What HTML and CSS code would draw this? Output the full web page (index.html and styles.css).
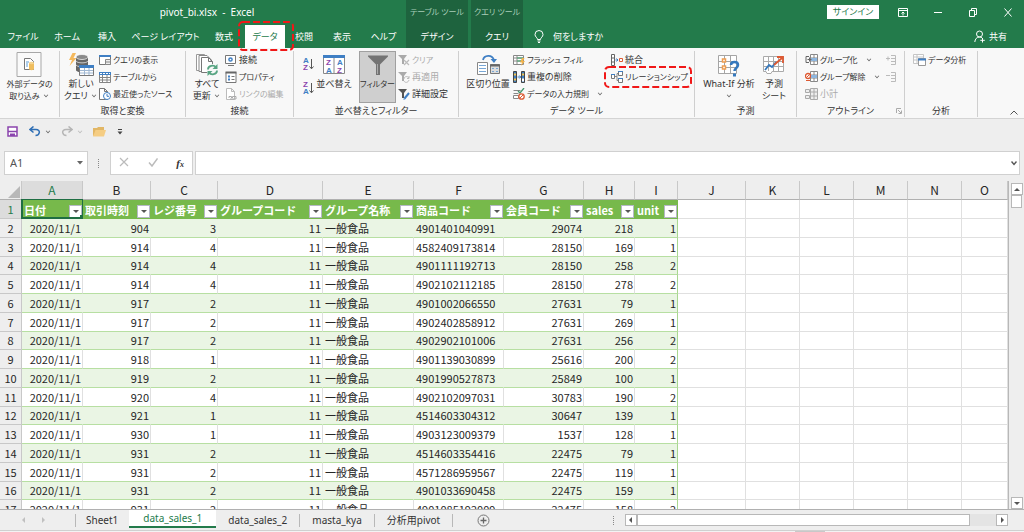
FILE: index.html
```html
<!DOCTYPE html>
<html lang="ja">
<head>
    <meta charset="UTF-8">
    <meta name="viewport" content="width=device-width, initial-scale=1.0">
    <title>pivot_bi.xlsx - Excel</title>
    <link rel="stylesheet" href="styles.css">
</head>
<body>
    <header class="titlebar">
        <div class="main-tabs">
            <div class="doc-title">pivot_bi.xlsx&nbsp; -&nbsp; Excel</div>
            <nav class="tabs">
                <button type="button" class="tab">ファイル</button>
                <button type="button" class="tab">ホーム</button>
                <button type="button" class="tab">挿入</button>
                <button type="button" class="tab">ページ レイアウト</button>
                <button type="button" class="tab">数式</button>
                <button type="button" class="tab active">データ
                    <svg class="mark mark-tab" viewBox="0 0 56 30"><rect x="1" y="1" width="54" height="28" rx="4"/></svg>
                </button>
                <button type="button" class="tab">校閲</button>
                <button type="button" class="tab">表示</button>
                <button type="button" class="tab">ヘルプ</button>
            </nav>
        </div>
        <div class="context context-table">
            <span class="context-name kana">テーブル ツール</span>
            <button type="button" class="tab">デザイン</button>
        </div>
        <div class="context context-query">
            <span class="context-name kana">クエリ ツール</span>
            <button type="button" class="tab">クエリ</button>
        </div>
        <div class="title-right">
            <div class="window-row">
                <button type="button" class="signin">サインイン</button>
                <button type="button" class="win" aria-label="リボンの表示オプション">
                    <svg width="10" height="9" viewBox="0 0 10 9"><path d="M.5 .5h9v8h-9zM.5 2.500h9M5 7.500V4M3.500 5.500L5 4l1.500 1.500"/></svg>
                </button>
                <button type="button" class="win" aria-label="最小化">
                    <svg width="10" height="9" viewBox="0 0 10 9"><path d="M1 4.500h8"/></svg>
                </button>
                <button type="button" class="win" aria-label="元に戻す">
                    <svg width="10" height="9" viewBox="0 0 10 9"><path d="M1.500 2.500h5v6h-5zM3.500 2.500v-2h5v6h-2"/></svg>
                </button>
                <button type="button" class="win" aria-label="閉じる">
                    <svg width="10" height="9" viewBox="0 0 10 9"><path d="M1.500 .5l7 8M8.500 .5l-7 8"/></svg>
                </button>
            </div>
            <div class="tell-row">
                <button type="button" class="tell">
                    <svg width="10" height="13" viewBox="0 0 10 13"><path d="M3.500 9.500C3.500 7.500 1 7 1 4.500a4 4 0 0 1 8 0C9 7 6.500 7.500 6.500 9.500zM3.500 11h3M4 12.500h2"/></svg>
                    何をしますか
                </button>
                <button type="button" class="share">
                    <svg width="12" height="13" viewBox="0 0 12 13"><circle cx="5.500" cy="4" r="3"/><path d="M.8 12c.2-3 2-5 4.700-5 1.200 0 2 .4 2.700 1M8.500 8v4.500M6.300 10.300h4.500"/></svg>
                    共有
                </button>
            </div>
        </div>
    </header>

    <section class="ribbon">
        <div class="group g-external">
            <div class="group-body">
                <button type="button" class="big">
                    <span class="big-icon"><svg width="26" height="25" viewBox="0 0 26 25"><path d="M1 .5h24v24H1z" fill="#fafafa" stroke="#a8a8a8"/><path d="M8.500 6.500h6l3 3v8h-9z" fill="#fff" stroke="#777"/><path d="M10 10h3M10 12h2M10 14h2" stroke="#5b9bd5"/><path d="M13 11v6c0 1.500 5 1.500 5 0v-6" fill="#efbd5d"/><ellipse cx="15.500" cy="11" rx="2.500" ry="1.200" fill="#f6d591"/></svg></span>
                    <span class="kana">外部データの<br>取り込み <i class="caret"></i></span>
                </button>
            </div>
        </div>

        <div class="group g-transform">
            <div class="group-body">
                <button type="button" class="big">
                    <span class="big-icon"><svg width="26" height="25" viewBox="0 0 26 25"><path d="M8 5v13c0 3 12 3 12 0V5" fill="#666"/><ellipse cx="14" cy="5" rx="6" ry="2.500" fill="#8a8a8a" stroke="#fff" stroke-width=".7"/><path d="M8 9c1 2.500 11 2.500 12 0M8 13c1 2 7 2 8 1" fill="none" stroke="#ccc"/><path d="M4.500 1L1 8h3L1.500 14 8.500 6H5.500L8 1z" fill="#f5b95d"/><path d="M11.500 13.500h14v10h-14z" fill="#fff" stroke="#777"/><path d="M11 13h15v3H11z" fill="#3f7fc4"/><path d="M12 18.500h13M12 21h13M16.500 16v7M21 16v7" stroke="#9fb7d2"/></svg></span>
                    <span>新しい<br>クエリ <i class="caret"></i></span>
                </button>
                <div class="stack">
                    <button type="button" class="small kana"><svg width="12" height="12" viewBox="0 0 12 12"><path d="M.5 1.500h11v9H.5z" fill="#fff" stroke="#777"/><path d="M0 1h12v2H0z" fill="#3f7fc4"/><path d="M6.500 5.500h5v5h-5zM7 8h4" fill="#eee" stroke="#888"/></svg>クエリの表示</button>
                    <button type="button" class="small kana"><svg width="12" height="12" viewBox="0 0 12 12"><path d="M.5 1.500h11v10H.5zM0 6.500h12M0 9h12M3.500 4v8M8 4v8" fill="#fff" stroke="#858585"/><path d="M0 1h12v3H0z" fill="#3f7fc4"/><path d="M1 2.500h10" stroke="#fff" stroke-dasharray="2 1"/></svg>テーブルから</button>
                    <button type="button" class="small kana"><svg width="12" height="12" viewBox="0 0 12 12"><path d="M.5 .5h5l3 3v8h-8zM5.500 .5v3h3" fill="#fff" stroke="#777"/><circle cx="8" cy="8" r="3.500" fill="#fff" stroke="#3f7fc4"/><path d="M8 6v2.300h2" fill="none" stroke="#3f7fc4"/></svg>最近使ったソース</button>
                </div>
            </div>
            <div class="group-name">取得と変換</div>
        </div>

        <div class="group g-connect">
            <div class="group-body">
                <button type="button" class="big">
                    <span class="big-icon"><svg width="24" height="25" viewBox="0 0 24 25"><path d="M1.500 2.500h8l4 4v12h-12z" fill="#fff" stroke="#999"/><path d="M4 3.500h8l4 4v12H4z" fill="#fff" stroke="#888"/><path d="M6.500 5.500h7l4 4v11h-11zM13.500 5.500v4h4" fill="#fff" stroke="#777"/><circle cx="17.500" cy="18" r="6" fill="#f8f8f8"/><path d="M13 17.500c0-4 6-5 8-2M22 18.500c0 4-6 5-8 2" fill="none" stroke="#58a583" stroke-width="1.800"/><path d="M22.500 12v5h-5zM12.500 24v-5h5z" fill="#58a583"/></svg></span>
                    <span>すべて<br>更新 <i class="caret"></i></span>
                </button>
                <div class="stack">
                    <button type="button" class="small"><svg width="12" height="12" viewBox="0 0 12 12"><path d="M.5 1.500h10v8H.5zM3 11.500h6" fill="#fff" stroke="#777"/><circle cx="5.500" cy="5.500" r="1.600" fill="none" stroke="#3f7fc4" stroke-width="1.500"/></svg>接続</button>
                    <button type="button" class="small kana"><svg width="12" height="12" viewBox="0 0 12 12"><path d="M1 1.500h10v10H1z" fill="#fff" stroke="#777"/><path d="M.5 1.500h11" stroke="#666" stroke-width="2"/><path d="M3 5.500h2M3 8.500h2" stroke="#3f7fc4" stroke-width="2"/><path d="M6.500 5.500h3M6.500 8.500h3" stroke="#777"/></svg>プロパティ</button>
                    <button type="button" class="small kana off"><svg width="12" height="12" viewBox="0 0 12 12"><path d="M1.500 .5h5l3 3v8h-8zM6.500 .5v3h3" fill="#fff" stroke="#bbb"/><path d="M4 10V8.500h2.500V10M7.500 10V8.500H11V11H5" fill="none" stroke="#aaa"/></svg>リンクの編集</button>
                </div>
            </div>
            <div class="group-name">接続</div>
        </div>

        <div class="group g-sort">
            <div class="group-body">
                <div class="sort-pair">
                    <button type="button" class="sort" aria-label="昇順">
                        <svg width="11" height="14" viewBox="0 0 11 14"><text x="0" y="6" class="az a">A</text><text x="0" y="13" class="az z">Z</text><path d="M8.500 2v9.500M6.500 9.500l2 2.300 2-2.300" fill="none" stroke="#555"/></svg>
                    </button>
                    <button type="button" class="sort" aria-label="降順">
                        <svg width="11" height="14" viewBox="0 0 11 14"><text x="0" y="6" class="az z">Z</text><text x="0" y="13" class="az a">A</text><path d="M8.500 2v9.500M6.500 9.500l2 2.300 2-2.300" fill="none" stroke="#555"/></svg>
                    </button>
                </div>
                <button type="button" class="big">
                    <span class="big-icon"><svg width="22" height="20" viewBox="0 0 22 20"><path d="M.5 .5h21v18H.5zM11 3v16" fill="#fff" stroke="#888"/><path d="M0 0h22v3H0z" fill="#3f7fc4"/><text x="3" y="10" class="az z">Z</text><text x="3" y="18" class="az a">A</text><text x="14" y="10" class="az a">A</text><text x="14" y="18" class="az z">Z</text></svg></span>
                    <span>並べ替え</span>
                </button>
                <button type="button" class="big pressed">
                    <span class="big-icon"><svg width="22" height="22" viewBox="0 0 22 22"><path d="M1 1.500h20v1l-8 8V21H9V10.500l-8-8z" fill="#737373"/><path d="M10.500 10v10" stroke="#aaa"/></svg></span>
                    <span class="kana">フィルター</span>
                </button>
                <div class="stack">
                    <button type="button" class="small kana off"><svg width="12" height="12" viewBox="0 0 12 12"><path d="M0 1h9L6 5v5H4V5z" fill="#aaa"/><path d="M6 6l5 5M11 6l-5 5" stroke="#bbb" stroke-width="1.200"/></svg>クリア</button>
                    <button type="button" class="small off"><svg width="12" height="12" viewBox="0 0 12 12"><path d="M0 1h9L6 5v5H4V5z" fill="#aaa"/><path d="M6 8c0-3 4-3 5-1M11 9c-1 3-4 3-5 1M11 5v2.500H9" fill="none" stroke="#bbb"/></svg>再適用</button>
                    <button type="button" class="small"><svg width="12" height="12" viewBox="0 0 12 12"><path d="M0 1h9L6 5v5H4V5z" fill="#555"/><path d="M11 5L6.500 10.500" stroke="#3f7fc4" stroke-width="2"/><path d="M5.500 12l.3-2 1.700 1z" fill="#3f7fc4"/></svg>詳細設定</button>
                </div>
            </div>
            <div class="group-name">並べ替えとフィルター</div>
        </div>

        <div class="group g-tools">
            <div class="group-body">
                <button type="button" class="big">
                    <span class="big-icon"><svg width="24" height="22" viewBox="0 0 24 22"><path d="M7 6c1-5 9-6 11 0" fill="none" stroke="#3f7fc4" stroke-width="1.800"/><path d="M14.500 5H21l-3 4z" fill="#3f7fc4"/><path d="M1.500 8.500h10v12h-10z" fill="#fff" stroke="#888"/><path d="M3 11.500h7M3 14.500h7M3 17.500h7" stroke="#78a7d6"/><path d="M14.500 10.500h9v9h-9z" fill="#ddd" stroke="#777"/><path d="M14 11.500h10" stroke="#666" stroke-width="2"/><path d="M16 14.500h2M20 14.500h2M16 17.500h2M20 17.500h2" stroke="#78a7d6"/></svg></span>
                    <span>区切り位置</span>
                </button>
                <div class="stack stack-tools">
                    <button type="button" class="small kana"><svg width="12" height="12" viewBox="0 0 12 12"><path d="M.5 1.500h10v9H.5zM1 4h9M1 7h7M4 2v8" fill="#fff" stroke="#888"/><path d="M4 4h6M4 7h4" stroke="#65a982" stroke-width="1.300"/><path d="M9 4L7 8.500h2L8 12l4-5h-2l1.500-3z" fill="#f2b24b"/></svg>フラッシュ フィル</button>
                    <button type="button" class="small"><svg width="12" height="12" viewBox="0 0 12 12"><path d="M.5 .5h3v11h-3z" fill="#3f7fc4" stroke="#444"/><path d="M8.500 .5h3v11h-3z" fill="#3f7fc4" stroke="#444"/><path d="M1 3.500h2M1 8.500h2M9 3.500h2" stroke="#f3c34e" stroke-width="2"/><path d="M9 9h2" stroke="#fff" stroke-width="3"/><path d="M4.500 6h3M6.300 4.500L7.800 6 6.300 7.500" fill="none" stroke="#3f7fc4"/></svg>重複の削除</button>
                    <button type="button" class="small kana"><svg width="12" height="12" viewBox="0 0 12 12"><path d="M.5 2.500h7M.5 5.500h5M.5 7.500h5v3h-5z" fill="#fff" stroke="#888"/><path d="M5 3l2 2 4-5" fill="none" stroke="#45966c" stroke-width="1.300"/><circle cx="8.500" cy="8.500" r="2.700" fill="#fff" stroke="#dd5a33" stroke-width="1.300"/><path d="M6.800 10.200l3.400-3.400" stroke="#dd5a33"/></svg>データの入力規則<i class="caret"></i></button>
                </div>
                <div class="stack">
                    <button type="button" class="small"><svg width="12" height="12" viewBox="0 0 12 12"><path d="M.5 .5h3v11h-3zM.5 4h3M.5 8h3" fill="#fff" stroke="#666"/><path d="M4.500 6h2.500M5.500 4.500L7 6 5.500 7.500" fill="none" stroke="#3f7fc4"/><path d="M8.500 4.500h3v3h-3z" fill="#fff" stroke="#dd5a33"/></svg>統合</button>
                    <button type="button" class="small kana"><svg width="12" height="12" viewBox="0 0 12 12"><path d="M4 5.500h2V2.500h2M6 5.500v4h2" fill="none" stroke="#888"/><path d="M.5 3.500h3v4h-3zM7.500 .5h4v4h-4zM7.500 7.500h4v4h-4z" fill="#fff" stroke="#777"/><path d="M0 3.500h4M7 .5h5M7 7.500h5" stroke="#3f7fc4"/></svg>リレーションシップ
                        <svg class="mark mark-relation" viewBox="0 0 88 22"><rect x="1" y="1" width="86" height="20" rx="4"/></svg>
                    </button>
                </div>
            </div>
            <div class="group-name">データ ツール</div>
        </div>

        <div class="group g-forecast">
            <div class="group-body">
                <button type="button" class="big">
                    <span class="big-icon"><svg width="22" height="24" viewBox="0 0 22 24"><path d="M.5 2.500h18v18H.5zM0 8.500h19M0 14.500h19M6.500 2v19M12.500 2v19" fill="#fff" stroke="#a5a5a5"/><path d="M4.500 6h3v3h-3zM4.500 13h3v3h-3z" fill="#fff" stroke="#ee9d52" stroke-width="1.500"/><path d="M13 12c0-4 7-4 7 0 0 3-3.500 3-3.500 6" fill="none" stroke="#3578bd" stroke-width="2.500"/><path d="M15 20.500h3v3h-3z" fill="#3578bd"/></svg></span>
                    <span>What-If 分析<br><i class="caret"></i></span>
                </button>
                <button type="button" class="big">
                    <span class="big-icon"><svg width="22" height="22" viewBox="0 0 22 22"><path d="M.5 2.500h20v15H9l-1 2H4l-1-2H.5zM0 7.500h21M0 12.500h21M5.500 2v15M10.500 2v15M15.500 2v15" fill="#fff" stroke="#aaa"/><path d="M2 16l4-5 3 2 4-5" fill="none" stroke="#3578bd" stroke-width="1.800"/><path d="M11 11l8-7M14 3h6v6" fill="none" stroke="#dd5a33" stroke-width="1.800"/></svg></span>
                    <span>予測<br>シート</span>
                </button>
            </div>
            <div class="group-name">予測</div>
        </div>

        <div class="group g-outline">
            <div class="group-body">
                <div class="stack">
                    <button type="button" class="small kana"><svg width="13" height="12" viewBox="0 0 13 12"><path d="M5.500 .5h7v10h-7zM5 4h8M5 7h8M9 1v9" fill="#fff" stroke="#888"/><path d="M6 4h6v3H6z" fill="#8db6df"/><path d="M4 2.500H1v6h3M2.500 5.500h4M4.500 3.500v4" fill="none" stroke="#666"/></svg>グループ化<i class="caret"></i></button>
                    <button type="button" class="small kana"><svg width="13" height="12" viewBox="0 0 13 12"><path d="M5.500 .5h7v10h-7zM5 4h8M5 7h8M9 1v9" fill="#fff" stroke="#888"/><path d="M6 4h6v3H6z" fill="#8db6df"/><circle cx="3" cy="5" r="2.500" fill="#fff" stroke="#dd5a33" stroke-width="1.300"/><path d="M1.500 6.500l3-3M1 9.500h4" stroke="#dd5a33"/></svg>グループ解除<i class="caret"></i></button>
                    <button type="button" class="small off"><svg width="13" height="12" viewBox="0 0 13 12"><path d="M.5 1.500h4v3h-4zM.5 7.500h4v3h-4zM5.500 .5h7v11h-7zM5 4h8M5 8h8M9 1v10" fill="#eee" stroke="#aaa"/></svg>小計</button>
                </div>
                <div class="stack stack-detail">
                    <button type="button" class="small" aria-label="詳細データの表示"><svg width="10" height="12" viewBox="0 0 10 12"><path d="M0 4.500h4M2 2.500v4M5 1.500h4.500v9H5M5 4.500h4M5 7.500h4" fill="none" stroke="#bbb"/></svg></button>
                    <button type="button" class="small" aria-label="詳細を表示しない"><svg width="10" height="12" viewBox="0 0 10 12"><path d="M0 4.500h4M5 1.500h4.500v9H5M5 4.500h4M5 7.500h4" fill="none" stroke="#bbb"/></svg></button>
                </div>
            </div>
            <div class="group-name">アウトライン
                <svg class="launcher" width="6" height="6" viewBox="0 0 6 6"><path d="M.5 5V.5H5M2 2l3 3M5.500 2.500v3h-3" fill="none" stroke="#aaa"/></svg>
            </div>
        </div>

        <div class="group g-analysis">
            <div class="group-body">
                <div class="stack">
                    <button type="button" class="small kana"><svg width="13" height="12" viewBox="0 0 13 12"><path d="M.5 .5h10v9H.5zM1 3h9M1 6h9M4 1v8" fill="#fff" stroke="#c5c5c5"/><path d="M5.500 4.500h7v7h-7z" fill="#fff" stroke="#999"/><path d="M5 5.500h8" stroke="#3f7fc4" stroke-width="2"/></svg>データ分析</button>
                </div>
            </div>
            <div class="group-name">分析</div>
        </div>
        <button type="button" class="collapse" aria-label="リボンを折りたたむ"><svg width="8" height="5" viewBox="0 0 8 5"><path d="M.5 4.500L4 1l3.500 3.500" fill="none" stroke="#555"/></svg></button>
    </section>

    <div class="quick">
        <button type="button" aria-label="上書き保存"><svg width="11" height="11" viewBox="0 0 11 11"><path d="M1 1h9v9H1z" fill="#fff" stroke="#8b44ad" stroke-width="1.500"/><path d="M1 5.500h9" stroke="#8b44ad" stroke-width="1.500"/><path d="M3 7.500h5V10H3z" fill="#8b44ad"/></svg></button>
        <button type="button" aria-label="元に戻す"><svg width="12" height="11" viewBox="0 0 12 11"><path d="M4.500 .5L1 3.500l3.500 3M1 3.500h6c5 0 4 6-.5 6" fill="none" stroke="#2f6fb5" stroke-width="1.500"/></svg><i class="caret"></i></button>
        <button type="button" class="off" aria-label="やり直し"><svg width="12" height="11" viewBox="0 0 12 11"><path d="M7.500 .5L11 3.500l-3.500 3M11 3.500H5c-5 0-4 6 .5 6" fill="none" stroke="#b5b5b5" stroke-width="1.500"/></svg><i class="caret"></i></button>
        <button type="button" aria-label="開く"><svg width="13" height="11" viewBox="0 0 13 11"><path d="M0 10V2h4l1-1h6v3" fill="#e2b766"/><path d="M2.500 4H13l-2 6.500H0z" fill="#f5cd83"/></svg></button>
        <button type="button" class="more" aria-label="クイック アクセス ツール バーのユーザー設定"><svg width="6" height="6" viewBox="0 0 6 6"><path d="M1 .5h4" stroke="#444"/><path d="M.5 2.500h5L3 5.500z" fill="#444"/></svg></button>
    </div>

    <div class="formula">
        <div class="name-box">
            <input type="text" value="A1" aria-label="名前ボックス">
            <svg width="6" height="4" viewBox="0 0 6 4"><path d="M0 0h6L3 3.500z" fill="#666"/></svg>
        </div>
        <span class="dots"></span>
        <div class="fx">
            <button type="button" aria-label="キャンセル"><svg width="10" height="10" viewBox="0 0 10 10"><path d="M1 1l8 8M9 1L1 9" stroke="#bbb" stroke-width="1.200"/></svg></button>
            <button type="button" aria-label="入力"><svg width="10" height="10" viewBox="0 0 10 10"><path d="M1 5.500L4 9l5.500-7.500" fill="none" stroke="#bbb" stroke-width="1.500"/></svg></button>
            <button type="button" class="fx-btn" aria-label="関数の挿入">f<sub>x</sub></button>
        </div>
        <div class="formula-box">
            <input type="text" value="" aria-label="数式バー">
            <svg width="6" height="5" viewBox="0 0 6 5"><path d="M.5 .5L3 3.500 5.500 .5" fill="none" stroke="#555" stroke-width="1.400"/></svg>
        </div>
    </div>

    <main class="sheet">
        <div class="cells">
            <table class="grid">
                <colgroup>
                    <col class="c-num"><col class="c-a"><col class="c-b"><col class="c-c"><col class="c-d"><col class="c-e">
                    <col class="c-f"><col class="c-g"><col class="c-h"><col class="c-i"><col class="c-j">
                    <col class="c-std"><col class="c-std"><col class="c-std"><col class="c-std"><col>
                </colgroup>
                <thead><tr class="letters"></tr></thead>
                <tbody></tbody>
            </table>
        </div>
        <div class="vscroll">
            <button type="button" class="arrow up" aria-label="上へ"></button>
            <div class="vthumb"></div>
            <button type="button" class="arrow down" aria-label="下へ"></button>
        </div>
    </main>

    <footer class="bottom">
        <div class="sheet-nav">
            <button type="button" class="arrow left faint" aria-label="前のシート"></button>
            <button type="button" class="arrow right faint" aria-label="次のシート"></button>
        </div>
        <button type="button" class="sheet-tab first">Sheet1</button>
        <button type="button" class="sheet-tab current">data_sales_1</button>
        <button type="button" class="sheet-tab">data_sales_2</button>
        <button type="button" class="sheet-tab">masta_kya</button>
        <button type="button" class="sheet-tab">分析用pivot</button>
        <button type="button" class="add" aria-label="新しいシート"><svg width="13" height="13" viewBox="0 0 13 13"><circle cx="6.500" cy="6.500" r="5.500" fill="none" stroke="#777"/><path d="M6.500 3.500v6M3.500 6.500h6" stroke="#666" stroke-width="1.300"/></svg></button>
        <span class="dots"></span>
        <div class="hscroll">
            <button type="button" class="arrow left" aria-label="左へ"></button>
            <div class="hthumb"></div>
            <button type="button" class="arrow right" aria-label="右へ"></button>
        </div>
    </footer>
    <div class="status"><span></span></div>

    <script src="script.js"></script>
</body>
</html>
```
FILE: styles.css
```css
*{
    margin: 0;
    padding: 0;
    box-sizing: border-box;
}
body{
    height: 100vh;
    display: flex;
    flex-direction: column;
    overflow: hidden;
    background-color: #eeeeee;
    color: #333;
    font-family: "Noto Sans", "Noto Sans CJK JP", sans-serif;
    font-size: 9px;
    line-height: 12px;
    font-feature-settings: "palt";
}
button, input{
    font: inherit;
    font-feature-settings: inherit;
    color: inherit;
    border: none;
    background: none;
}
button{
    white-space: nowrap;
}
svg{
    flex: none;
}
.kana{
    font-size: 8px;
}
.off{
    color: #aaa;
}
.caret{
    display: inline-block;
    width: 4px;
    height: 4px;
    margin: 0 2px 2px;
    border: solid #666;
    border-width: 0 1px 1px 0;
    transform: rotate(45deg) scale(0.8);
}
.off .caret{
    border-color: #bbb;
}

/* title bar */
.titlebar{
    display: flex;
    flex: none;
    height: 48px;
    background-color: #237b4b;
    color: #fff;
}
.main-tabs{
    flex: 0 0 406px;
}
.doc-title{
    height: 24px;
    padding-left: 8px;
    text-align: center;
    font-size: 10px;
    line-height: 24px;
}
.tabs{
    display: grid;
    grid-template-columns: 46px 42px 38px 79px 38px 42px 38px 38px 1fr;
    height: 24px;
}
.tab{
    position: relative;
    height: 24px;
    padding-top: 1px;
    text-align: center;
}
.tab.active{
    margin: 1px 0 0 2px;
    height: 23px;
    background-color: #fff;
    color: #237b4b;
}
.mark{
    position: absolute;
    fill: none;
    stroke: #f01818;
    stroke-width: 2;
    stroke-dasharray: 7 3;
    z-index: 1;
}
.mark-tab{
    left: -7px;
    top: -4px;
    width: 56px;
    height: 30px;
}
.context{
    display: flex;
    flex-direction: column;
    background-color: #1e633e;
}
.context-table{
    flex: 0 0 62px;
}
.context-query{
    flex: 0 0 52px;
    margin-left: 3px;
}
.context-name{
    height: 24px;
    line-height: 24px;
    text-align: center;
    color: #a8cdb8;
}
.title-right{
    flex: 1;
}
.window-row, .tell-row{
    display: flex;
    align-items: center;
    height: 24px;
}
.window-row{
    justify-content: flex-end;
    gap: 25px;
    padding-right: 11px;
}
.signin{
    width: 52px;
    height: 14px;
    margin-right: -6px;
    background-color: #fff;
    color: #237b4b;
}
.win, .win svg, .tell svg, .share svg{
    display: block;
    fill: none;
    stroke: #fff;
}
.tell-row{
    justify-content: space-between;
    padding: 1px 17px 0 11px;
}
.tell, .share{
    display: flex;
    align-items: center;
    gap: 3px;
}
.tell{
    gap: 9px;
}

/* ribbon */
.ribbon{
    display: flex;
    flex: none;
    height: 71px;
    padding-top: 3px;
    background-color: #f8f8f8;
    border-bottom: 1px solid #d4d4d4;
}
.group{
    display: flex;
    flex-direction: column;
    min-width: 0;
    height: 66px;
    border-right: 1px solid #cfcfcf;
}
.group-body{
    display: flex;
    height: 54px;
}
.group-name{
    position: relative;
    text-align: center;
}
.big{
    display: flex;
    flex-direction: column;
    align-items: center;
    height: 52px;
}
.big-icon{
    display: flex;
    align-items: center;
    height: 27px;
}
.pressed{
    border: 1px solid #a0a0a0;
    background-color: #cfcfcf;
}
.pressed .big-icon{
    height: 26px;
}
.stack{
    display: flex;
    flex-direction: column;
    align-items: flex-start;
}
.small{
    position: relative;
    display: flex;
    align-items: center;
    gap: 2px;
    height: 17px;
}
.small .caret{
    margin-left: 7px;
}
.g-external{
    flex: 0 0 60px;
    align-items: center;
}
.g-transform{
    flex: 0 0 126px;
}
.g-transform .big{
    width: 32px;
    margin: 0 2px 0 5px;
}
.g-connect{
    flex: 0 0 108px;
}
.g-connect .big{
    width: 32px;
    margin: 0 2px 0 5px;
}
.g-sort{
    flex: 0 0 165px;
}
.sort-pair{
    display: flex;
    flex-direction: column;
    gap: 10px;
    padding: 6px 0 0 9px;
}
.sort{
    height: 14px;
}
.az{
    font: bold 8px "Liberation Sans", sans-serif;
}
.a{
    fill: #3f7fc4;
}
.z{
    fill: #8b44ad;
}
.g-sort .big{
    width: 40px;
}
.g-sort .pressed{
    width: 37px;
    margin: 0 2px 0 5px;
}
.g-tools{
    flex: 0 0 236px;
}
.g-tools .big{
    width: 46px;
    margin: 0 2px 0 6px;
}
.stack-tools{
    width: 98px;
}
.mark-relation{
    left: -7px;
    top: -2px;
    width: 88px;
    height: 22px;
}
.g-forecast{
    flex: 0 0 102px;
}
.g-forecast .big{
    width: 56px;
    margin-left: 6px;
}
.g-forecast .big + .big{
    width: 34px;
    margin-left: 0;
}
.g-outline{
    flex: 0 0 108px;
}
.g-outline .stack{
    width: 81px;
    margin-left: 8px;
}
.g-outline .stack-detail{
    width: 10px;
    margin-left: 0;
}
.launcher{
    position: absolute;
    right: 2px;
    top: 3px;
}
.g-analysis{
    flex: 0 0 73px;
}
.g-analysis .stack{
    margin-left: 8px;
}
.collapse{
    align-self: flex-end;
    margin: 0 6px 0 auto;
}

/* quick access */
.quick{
    display: flex;
    flex: none;
    align-items: center;
    gap: 11px;
    height: 25px;
    padding-left: 7px;
}
.quick button{
    display: flex;
    align-items: center;
}
.quick .caret{
    margin-left: 5px;
    margin-right: 0;
}

/* formula bar */
.formula{
    display: flex;
    flex: none;
    height: 37px;
    padding: 7px 4px 6px;
}
.name-box, .fx, .formula-box{
    display: flex;
    align-items: center;
    border: 1px solid #d0d0d0;
    background-color: #fff;
}
.name-box{
    width: 84px;
    padding: 0 4px 0 5px;
}
.name-box input{
    width: 100%;
    font-size: 11px;
    color: #555;
}
.dots{
    width: 1px;
    height: 9px;
    align-self: center;
    border-left: 1px dotted #888;
}
.formula .dots{
    margin: 0 11px 0 10px;
}
.fx{
    width: 83px;
    justify-content: space-between;
    padding: 0 8px;
}
.fx-btn{
    font: italic bold 11px "Liberation Serif", serif;
}
.fx-btn sub{
    font-size: 8px;
    vertical-align: baseline;
}
.formula-box{
    flex: 1;
    margin-left: 2px;
    padding: 0 2px;
}
.formula-box input{
    flex: 1;
    font-size: 11px;
}

/* cells */
.sheet{
    display: flex;
    flex: 1;
    min-height: 0;
    border-bottom: 1px solid #b0b0b0;
}
.cells{
    flex: 1;
    min-width: 0;
    overflow: hidden;
    border-right: 1px solid #b8b8b8;
}
.grid{
    width: 100%;
    table-layout: fixed;
    border-collapse: separate;
    border-spacing: 0;
    background-color: #fff;
    color: #262626;
    font-family: "Noto Sans CJK JP", sans-serif;
    font-size: 11px;
    line-height: 16px;
    font-feature-settings: normal;
}
.c-num{ width: 22px; }
.c-a{ width: 61px; }
.c-b{ width: 68px; }
.c-c{ width: 67px; }
.c-d{ width: 105px; }
.c-e{ width: 91px; }
.c-f{ width: 90px; }
.c-g{ width: 80px; }
.c-h{ width: 51px; }
.c-i{ width: 43px; }
.c-j{ width: 68px; }
.c-std{ width: 54px; }
.grid tr{
    height: 19px;
}
.grid tbody tr:nth-child(4n){
    height: 18px;
}
.grid th, .grid td{
    overflow: hidden;
    white-space: nowrap;
    border-right: 1px solid #e0e0e0;
    border-bottom: 1px solid #e0e0e0;
}
.grid td{
    padding: 0 1px 1px 2px;
}
.grid .letters th, .grid .num{
    background-color: #eeeeee;
    font-weight: normal;
    text-align: center;
    border-color: #c8c8c8;
}
.grid .num{
    padding-bottom: 1px;
}
.grid .letters th{
    border-bottom-color: #b0b0b0;
    font-size: 12px;
}
.grid .letters .picked, .grid .num.picked{
    background-color: #dcdcdc;
    color: #237b4b;
}
.grid .letters .picked{
    border-bottom-color: #237b4b;
}
.grid .letters .corner{
    text-align: right;
    vertical-align: bottom;
    line-height: 0;
}
.right{
    text-align: right;
}
.grid .field{
    position: relative;
    overflow: visible;
    padding: 0 0 0 2px;
    background-color: #77b94b;
    color: #fff;
    font-weight: bold;
    text-align: left;
    border-color: #77b94b;
}
.head{
    display: flex;
    justify-content: space-between;
    align-items: flex-end;
    height: 17px;
}
.filter{
    flex: none;
    width: 13px;
    height: 13px;
    border: 1px solid #b5b8c5;
    background-color: #fff;
    line-height: 0;
}
.filter::after{
    content: "";
    display: inline-block;
    border: 3px solid transparent;
    border-top: 3px solid #555;
    border-bottom: 0;
    vertical-align: middle;
}
.cursor{
    position: absolute;
    inset: -1px -1px -1px -1px;
    border: 1px solid #1f6e43;
    border-width: 1px 1px 2px 2px;
    pointer-events: none;
}
.cursor::after{
    content: "";
    position: absolute;
    right: -2px;
    bottom: -2px;
    width: 4px;
    height: 4px;
    background-color: #1f6e43;
}
.grid .data{
    border-bottom-color: #b7dfa2;
}
.grid .band .data{
    background-color: #eaf5e4;
    border-right-color: #eaf5e4;
}
.grid tr .data.last{
    border-right-color: #a9d790;
}

/* scroll bars */
.vscroll{
    display: flex;
    flex-direction: column;
    width: 15px;
    padding: 2px 2px 0 2px;
    background-color: #eeeeee;
}
.vthumb{
    height: 13px;
    border: 1px solid #b8b8b8;
    background-color: #fff;
}
.vscroll .down{
    margin-top: auto;
}
.arrow{
    display: flex;
    align-items: center;
    justify-content: center;
    width: 12px;
    height: 12px;
    border: 1px solid #b8b8b8;
    background-color: #fff;
}
.arrow::after{
    content: "";
    border: 3px solid transparent;
}
.up::after{
    border-bottom-color: #555;
    border-top-width: 0;
}
.down::after{
    border-top-color: #555;
    border-bottom-width: 0;
}
.left::after{
    border-right-color: #555;
    border-left-width: 0;
}
.right.arrow::after{
    border-left-color: #555;
    border-right-width: 0;
}
.faint{
    border: none;
    background: none;
    opacity: 0.3;
}

/* sheet tabs */
.bottom{
    display: flex;
    flex: none;
    align-items: center;
    height: 20px;
    padding-right: 16px;
    font-size: 10px;
}
.sheet-nav{
    display: flex;
    gap: 8px;
    width: 76px;
    height: 13px;
    padding-left: 17px;
    border-right: 1px solid #b8b8b8;
}
.sheet-tab{
    height: 13px;
    padding: 0 12px;
    border-right: 1px solid #b8b8b8;
    line-height: 13px;
}
.sheet-tab.first{
    padding: 0 11px 0 10px;
    border: none;
}
.sheet-tab.current{
    align-self: flex-start;
    height: 18px;
    padding: 0 14px;
    border: none;
    border-bottom: 2px solid #237b4b;
    background-color: #fff;
    color: #237b4b;
}
.add{
    height: 13px;
    margin-left: 24px;
}
.bottom .dots{
    margin: 0 11px 0 auto;
}
.hscroll{
    display: flex;
    flex: 0 0 38%;
    background-color: #e4e4e4;
}
.hthumb{
    flex: 0 0 87%;
    border: 1px solid #b8b8b8;
    background-color: #fff;
}
.hscroll .right{
    margin-left: auto;
}
.status{
    flex: none;
    height: 2px;
    border-top: 1px solid #d0d0d0;
    background-color: #f3f3f3;
}
.status span{
    display: block;
    width: 30px;
    height: 1px;
    margin-left: 77.6%;
    background-color: #c8c8c8;
}
```
FILE: script.js
```js
const letters = document.querySelector('.letters');
const tbody = document.querySelector('.grid tbody');

const fields = ['日付', '取引時刻', 'レジ番号', 'グループコード', 'グループ名称', '商品コード', '会員コード', 'sales', 'unit'];

// 取引時刻, レジ番号, 商品コード, 会員コード, sales, unit
const sales = [
    [904, 3, '4901401040991', 29074, 218, 1],
    [914, 4, '4582409173814', 28150, 169, 1],
    [914, 4, '4901111192713', 28150, 258, 2],
    [914, 4, '4902102112185', 28150, 278, 2],
    [917, 2, '4901002066550', 27631, 79, 1],
    [917, 2, '4902402858912', 27631, 269, 1],
    [917, 2, '4902902101006', 27631, 256, 2],
    [918, 1, '4901139030899', 25616, 200, 2],
    [919, 2, '4901990527873', 25849, 100, 1],
    [920, 4, '4902102097031', 30783, 190, 2],
    [921, 1, '4514603304312', 30647, 139, 1],
    [930, 1, '4903123009379', 1537, 128, 1],
    [931, 2, '4514603354416', 22475, 79, 1],
    [931, 2, '4571286959567', 22475, 119, 1],
    [931, 2, '4901033690458', 22475, 159, 1],
    [931, 2, '4901085192009', 22475, 158, 2]
];

letters.innerHTML = '<th class="corner"><svg width="13" height="13"><path d="M12 0v12H0z" fill="#b8b8b8"/></svg></th>' +
    [...'ABCDEFGHIJKLMNO'].map(l => `<th class="${l === 'A' ? 'picked' : ''}">${l}</th>`).join('');

const blank = '<td></td>'.repeat(6);

let html = '<tr><th class="num picked">1</th>';
fields.forEach((f, i) => {
    html += `<th class="field"><div class="head"><span>${f}</span><button type="button" class="filter" aria-label="${f}のフィルター"></button></div>${i === 0 ? '<span class="cursor"></span>' : ''}</th>`;
});
html += blank + '</tr>';

sales.forEach((s, i) => {
    const row = ['2020/11/1', s[0], s[1], 11, '一般食品', s[2], s[3], s[4], s[5]];
    html += `<tr class="${i % 2 === 0 ? 'band' : ''}"><th class="num">${i + 2}</th>`;
    row.forEach((v, c) => {
        const side = c === 4 || c === 5 ? '' : 'right';
        html += `<td class="data ${side} ${c === 8 ? 'last' : ''}">${v}</td>`;
    });
    html += blank + '</tr>';
});
tbody.innerHTML = html;
```
